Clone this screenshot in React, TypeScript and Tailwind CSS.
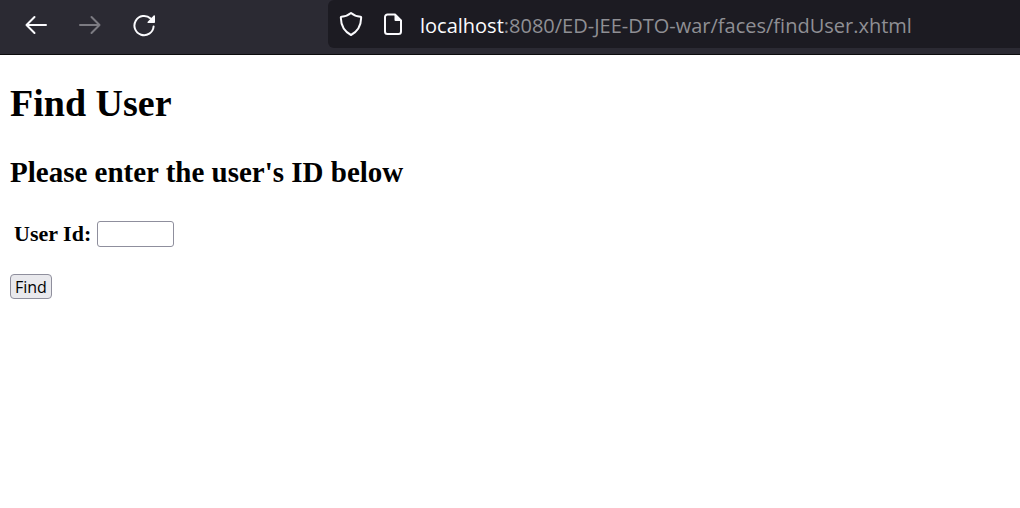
import React from "react";

function BackIcon() {
  return (
    <svg width="24" height="24" viewBox="0 0 24 24" fill="none" stroke="currentColor" strokeWidth="2" strokeLinecap="round" strokeLinejoin="round" aria-hidden="true">
      <path d="M22 12H2.5M10.500 4L2.500 12L10.500 20" />
    </svg>
  );
}

function ForwardIcon() {
  return (
    <svg width="24" height="24" viewBox="0 0 24 24" fill="none" stroke="currentColor" strokeWidth="2" strokeLinecap="round" strokeLinejoin="round" aria-hidden="true">
      <path d="M2 12H21.5M13.500 4L21.500 12L13.500 20" />
    </svg>
  );
}

function ReloadIcon() {
  return (
    <svg width="24" height="24" viewBox="0 0 24 24" fill="none" aria-hidden="true">
      <path d="M18.6 5.6A9.6 9.6 0 1 0 21.6 13.5" stroke="currentColor" strokeWidth="2" strokeLinecap="round" />
      <path d="M23 3V9.2a.8.8 0 0 1-.8.8H16.2c-.7 0-1-.8-.5-1.3L21.7 2.5c.5-.5 1.3-.2 1.3.5z" fill="currentColor" />
    </svg>
  );
}

function ShieldIcon() {
  return (
    <svg width="24" height="26" viewBox="0 0 24 26" fill="none" stroke="currentColor" strokeWidth="2" strokeLinejoin="round" aria-hidden="true">
      <path d="M12 2C9.5 4.2 5.5 5.5 2.5 5.7Q1.8 5.8 1.8 6.6C2 15 6 21 12 24C18 21 22 15 22.2 6.6Q22.2 5.8 21.5 5.7C18.5 5.5 14.5 4.2 12 2Z" />
    </svg>
  );
}

function PageIcon() {
  return (
    <svg width="20" height="24" viewBox="0 0 20 24" fill="none" aria-hidden="true">
      <path d="M12 2.5H4.5a2.500 2.500 0 0 0-2.500 2.500V19.500A2.500 2.500 0 0 0 4.500 22H15.500a2.500 2.500 0 0 0 2.500-2.500V8.500Z" stroke="currentColor" strokeWidth="2" strokeLinejoin="round" />
      <path d="M11.5 2L18.8 9H12.5a1 1 0 0 1-1-1Z" fill="currentColor" />
    </svg>
  );
}

export default function App() {
  return (
    <div className="min-h-screen bg-white text-black">
      <header className="flex items-start border-b border-[#0c0c0d] bg-[#2b2a33] pb-1.5 text-[#fbfbfe]">
        <nav aria-label="Browser" className="flex h-12 w-[328px] shrink-0 items-center gap-[30px] pt-0.5 pl-6">
          <button type="button" aria-label="Back"><BackIcon /></button>
          <button type="button" aria-label="Forward" disabled className="text-[#7c7b82]"><ForwardIcon /></button>
          <button type="button" aria-label="Reload"><ReloadIcon /></button>
        </nav>
        <div className="flex h-12 min-w-0 flex-1 items-center rounded-l-md bg-[#1c1b22] pl-[11px]">
          <ShieldIcon />
          <span className="ml-5"><PageIcon /></span>
          <span className="ml-[17px] truncate pt-1 font-['Open_Sans','Noto_Sans',sans-serif] text-xl text-[#8f8f94]">
            <span className="text-[#fbfbfe]">localhost</span>:8080/ED-JEE-DTO-war/faces/findUser.xhtml
          </span>
        </div>
      </header>

      <main className="px-2.5 pt-6 font-['Liberation_Serif','Times_New_Roman',serif]">
        <h1 className="text-[38px] leading-[48px] font-bold">Find User</h1>
        <h2 className="mt-7 text-[29px] leading-[34px] font-bold">Please enter the user's ID below</h2>
        <form className="mt-8" onSubmit={(event) => event.preventDefault()}>
          <div className="flex items-center gap-1.5 pl-1">
            <label htmlFor="user-id" className="text-[22px] leading-[26px] font-bold">User Id:</label>
            <input id="user-id" type="text" className="h-[26px] w-[77px] rounded-[3px] border border-[#8f8f9d] bg-white px-1 font-['Open_Sans',sans-serif] text-base" />
          </div>
          <button type="submit" className="mt-[27px] flex h-[25px] items-center rounded border border-[#8f8f9d] bg-[#e9e9ed] px-1 font-['Open_Sans','Noto_Sans',sans-serif] text-base leading-5">
            Find
          </button>
        </form>
      </main>
    </div>
  );
}
